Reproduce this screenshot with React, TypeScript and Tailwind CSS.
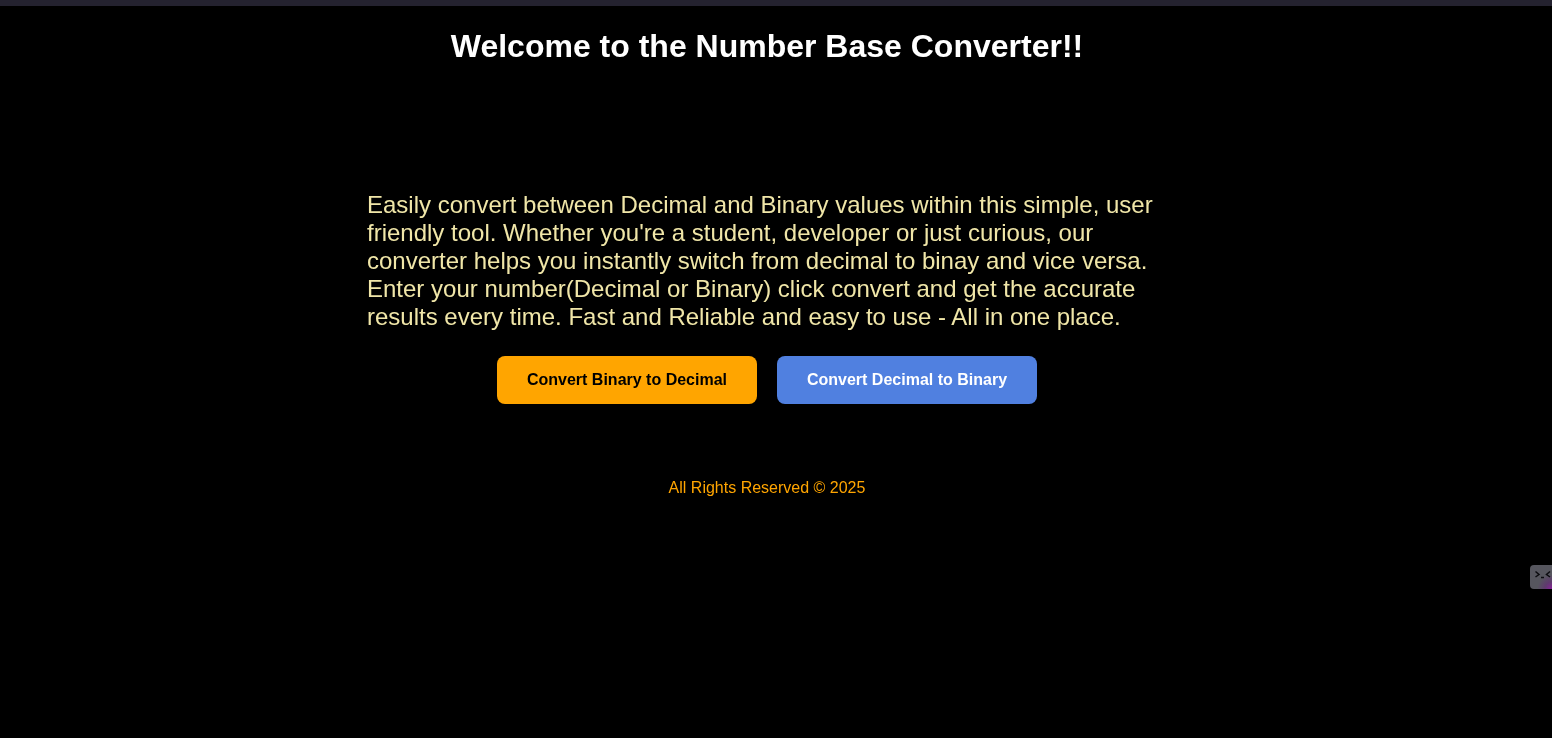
export default function App() {
  return (
    <div className="min-h-screen bg-black font-['Liberation_Sans',Arial,sans-serif] relative overflow-hidden">
      <div className="h-[6px] bg-[#24222f]" />
      <div className="w-[800px] ml-[367px] flex flex-col items-center [will-change:transform]">
        <h1 className="mt-[22px] text-[32px] leading-[37px] font-bold text-white text-center whitespace-nowrap">
          Welcome to the Number Base Converter!!
        </h1>
        <p className="mt-[126px] text-[24px] leading-[28px] text-[#f0e6a8] w-full">
          Easily convert between Decimal and Binary values within this simple, user friendly tool. Whether you're a student, developer or just curious, our converter helps you instantly switch from decimal to binay and vice versa. Enter your number(Decimal or Binary) click convert and get the accurate results every time. Fast and Reliable and easy to use - All in one place.
        </p>
        <div className="mt-[25px] flex gap-5">
          <button className="w-[260px] h-[48px] rounded-lg bg-[#ffa500] text-black font-bold text-base">
            Convert Binary to Decimal
          </button>
          <button className="w-[260px] h-[48px] rounded-lg bg-[#5080e0] text-white font-bold text-base">
            Convert Decimal to Binary
          </button>
        </div>
        <p className="mt-[72px] text-base text-[#ffa500]">All Rights Reserved © 2025</p>
      </div>
      {/* floating dev widget on the right edge */}
      <div className="absolute left-[1530px] top-[565px] w-[22px] h-[24px] rounded-l-[4px] bg-[radial-gradient(circle_at_100%_100%,#8a1f9a_0,#5f3a6e_22%,#56565e_45%)]">
        <svg width="22" height="24" viewBox="0 0 22 24" fill="none" stroke="#0c0c10" strokeWidth="1.5">
          <path d="M5.5 6.5 L9 9.5 L5.5 12" />
          <path d="M11 12.5 L14 12.5" />
          <path d="M20 6.5 L16.5 9.5 L20 12" />
        </svg>
      </div>
    </div>
  );
}
